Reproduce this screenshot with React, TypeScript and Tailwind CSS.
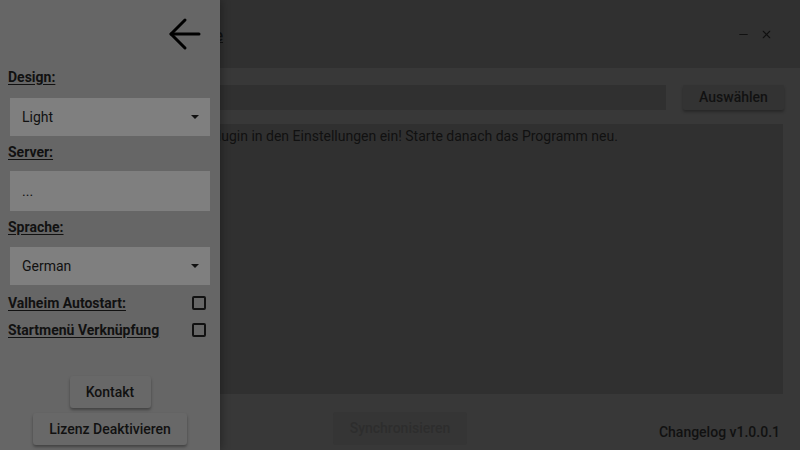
import { ArrowLeft, Minus, X } from "lucide-react";

const Label = ({ text }: { text: string }) => (
  <div className="h-[18px] flex items-center px-2 text-[14px] font-bold underline underline-offset-2 text-[#111]">
    {text}
  </div>
);

const Select = ({ value }: { value: string }) => (
  <div className="mx-[10px] h-[38px] bg-[#7f7f7f] flex items-center justify-between pl-3 pr-[11px] text-[14px] text-[#111]">
    <span>{value}</span>
    <svg width="8" height="4" viewBox="0 0 8 4">
      <path d="M0 0h8L4 4z" fill="#111" />
    </svg>
  </div>
);

const Check = ({ text }: { text: string }) => (
  <div className="flex items-center justify-between pl-2 pr-[14px] h-[14px]">
    <span className="text-[14px] font-bold underline underline-offset-2 text-[#111]">{text}</span>
    <div className="w-[14px] h-[14px] border-2 border-[#111] rounded-[2px]" />
  </div>
);

const Drawer = () => (
  <div className="absolute left-0 top-0 h-full w-[220px] bg-[#666666] flex flex-col shadow-[2px_0_8px_rgba(0,0,0,0.3)]">
    <div className="h-[68px] flex justify-end items-center pr-[11px]">
      <ArrowLeft size={48} strokeWidth={1.5} color="#000" />
    </div>
    <Label text="Design:" />
    <div className="mt-[12px]">
      <Select value="Light" />
    </div>
    <div className="mt-[7px]">
      <Label text="Server:" />
    </div>
    <div className="mt-[10px] mx-[10px] h-[40px] bg-[#7f7f7f] flex items-center pl-3 text-[14px] text-[#111]">...</div>
    <div className="mt-[7px]">
      <Label text="Sprache:" />
    </div>
    <div className="mt-[11px]">
      <Select value="German" />
    </div>
    <div className="mt-[11px] flex flex-col gap-[13px]">
      <Check text="Valheim Autostart:" />
      <Check text="Startmenü Verknüpfung" />
    </div>
    <div className="mt-auto mb-[5px] flex flex-col items-center gap-[5px]">
      <button className="h-[32px] w-[81px] bg-[#686868] rounded-[3px] shadow-[0_2px_3px_rgba(0,0,0,0.35)] text-[14px] font-medium text-[#111]">
        Kontakt
      </button>
      <button className="h-[32px] w-[154px] bg-[#686868] rounded-[3px] shadow-[0_2px_3px_rgba(0,0,0,0.35)] text-[14px] font-medium text-[#111]">
        Lizenz Deaktivieren
      </button>
    </div>
  </div>
);

export default function App() {
  return (
    <div
      className="relative w-[800px] h-[450px] overflow-hidden bg-[#383838] flex flex-col"
      style={{ fontFamily: "Roboto, 'Liberation Sans', sans-serif" }}
    >
      <div className="h-[68px] bg-[#303030] flex items-center justify-between pr-[27px]">
        <div className="w-[223px] flex justify-end pt-[3px]">
          <span className="text-[16px] font-medium text-[#111] underline">Valheim Plugin Update</span>
        </div>
        <div className="flex items-center gap-[10px] text-[#111]">
          <Minus size={13} strokeWidth={2} />
          <X size={13} strokeWidth={2} />
        </div>
      </div>
      <div className="flex-1 flex flex-col px-4 pt-[17px]">
        <div className="flex gap-[17px] h-[25px]">
          <div className="flex-1 bg-[#303030]" />
          <button className="w-[101px] bg-[#333333] rounded-[2px] shadow-[0_2px_3px_rgba(0,0,0,0.3)] text-[14px] font-medium text-[#111]">
            Auswählen
          </button>
        </div>
        <div className="mt-[14px] h-[270px] mr-[1px] bg-[#303030] pl-[17px] pr-[10px] pt-[2px] text-[14px] text-[#111]">
          Bitte trage den Pfad zu dem Plugin in den Einstellungen ein! Starte danach das Programm neu.
        </div>
        <div className="flex-1 relative flex justify-center pt-[18px]">
          <button className="h-[33px] w-[134px] bg-[#353535] rounded-[3px] text-[14px] font-medium text-[#2d2d2d]">
            Synchronisieren
          </button>
          <span className="absolute right-[4px] top-[28px] text-[14px] font-medium text-[#111]">Changelog v1.0.0.1</span>
        </div>
      </div>
      <Drawer />
    </div>
  );
}
